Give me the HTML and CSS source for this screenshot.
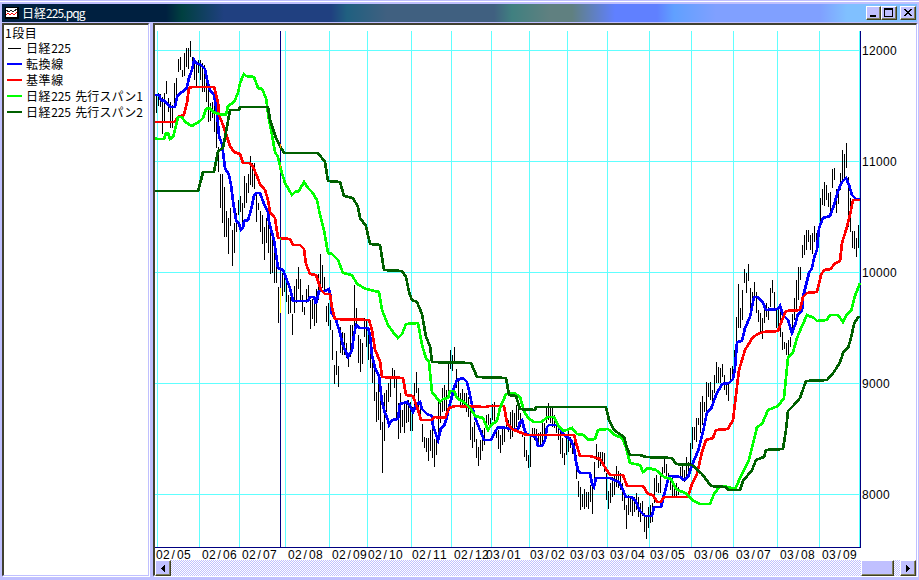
FILE: index.html
```html
<!DOCTYPE html>
<html lang="ja">
<head>
<meta charset="utf-8">
<title>日経225.pqg</title>
<link rel="stylesheet" href="styles.css">
</head>
<body>
<div class="window">
  <header class="titlebar">
    <svg class="app-icon" width="14" height="12" shape-rendering="crispEdges"><rect width="14" height="12" fill="#000"/><rect x="1" y="1" width="11" height="9" fill="#fff"/><path d="M1 3L4 5L6 3L8 5L12 2" fill="none" stroke="#222"/><path d="M1 8L3 6L5 8L7 6L9 8L12 5" fill="none" stroke="#f00"/></svg>
    <h1 class="title">日経<span>225.pqg</span></h1>
    <div class="controls">
      <button class="ctl min"><svg width="12" height="10" shape-rendering="crispEdges"><path d="M2 7h6v2H2z"/></svg></button>
      <button class="ctl"><svg width="12" height="10" shape-rendering="crispEdges"><path d="M1 0h9v9H1zM2 2v6h7V2z" fill-rule="evenodd"/></svg></button>
      <button class="ctl close"><svg width="12" height="10" shape-rendering="crispEdges"><path d="M2 1h2v1h1v1h2V2h1V1h2v1H9v1H8v1H7v1h1v1h1v1h1v1H8V7H7V6H5v1H4v1H2V7h1V6h1V5h1V4H4V3H3V2H2z"/></svg></button>
    </div>
  </header>
  <main class="content">
    <aside class="legend">
      <div class="heading">1段目</div>
      <ul>
        <li><i class="key price"></i><span>日経<em>225</em></span></li>
        <li><i class="key conversion"></i><span>転換線</span></li>
        <li><i class="key base"></i><span>基準線</span></li>
        <li><i class="key span1"></i><span>日経<em>225</em> <b>先行スパン1</b></span></li>
        <li><i class="key span2"></i><span>日経<em>225</em> <b>先行スパン2</b></span></li>
      </ul>
    </aside>
    <section class="chart-pane">
      <svg class="chart" viewBox="155 25 761 535" width="761" height="535">
        <g shape-rendering="crispEdges" fill="none">
          <path class="grid" d="M155 50.5H860M155 161.5H860M155 272.5H860M155 383.5H860M155 494.5H860M157.5 31V547M199.5 31V547M239.5 31V547M285.5 31V547M329.5 31V547M367.5 31V547M411.5 31V547M451.5 31V547M491.5 31V547M529.5 31V547M567.5 31V547M607.5 31V547M649.5 31V547M691.5 31V547M733.5 31V547M777.5 31V547M819.5 31V547M859.5 31V547"/>
          <path class="bars" id="bars"/>
          <path class="axis" d="M280.5 31V547M860.5 31V548M155 547.5H861"/>
          <polyline class="line conversion" points="155,95 159,95 161,100 165,101 168,105 171,107 175,107 177,97 180,93 184,91 187,87 189,78 192,70 194,60 196,63 201,65 205,69 207,80 210,90 214,95 217,112 219,136 222,144 225,168 229,175 231,185 233,201 236,220 239,224 241,230 243,228 244,221 248,220 251,210 254,196 256,193 260,193 264,204 268,212 269,222 274,240 278,268 283,270 288,283 290,288 293,301 308,301 310,297 314,297 316,304 319,291 325,291 329,289 331,298 331,312 336,320 340,333 343,345 348,357 352,350 354,335 356,325 360,328 368,328 370,335 372,355 375,368 379,376 382,402 385,413 388,420 389,425 392,420 398,419 400,404 407,402 410,406 413,412 416,405 420,402 422,409 427,414 432,416 433,426 438,440 441,428 444,426 447,417 449,407 451,400 454,388 457,380 463,378 467,382 470,395 473,410 476,420 480,430 484,440 491,440 495,432 498,427 513,429 518,429 520,422 522,420 524,428 526,434 536,437 538,446 542,446 545,440 547,427 549,425 558,425 563,434 571,440 574,448 576,462 578,470 580,473 590,473 592,484 594,487 596,478 610,478 614,480 619,482 622,488 626,497 632,497 636,502 640,511 645,516 652,516 654,507 661,507 664,495 668,480 670,476 680,477 684,480 688,477 692,465 698,451 703,432 707,412 711,409 716,395 722,384 729,383 733,379 735,368 737,342 742,341 745,328 750,317 754,297 758,297 763,303 766,310 778,309 780,306 783,315 788,320 792,333 795,325 798,314 802,311 803,297 809,273 812,268 814,258 817,250 819,228 823,218 830,216 834,205 838,191 842,182 846,178 849,185 852,195 856,199 860,199"/>
          <polyline class="line base" points="155,122 175,122 178,117 184,115 187,103 189,88 192,87 214,87 218,102 219,115 223,125 228,140 230,146 234,152 240,154 243,163 250,163 253,167 257,176 260,184 265,190 268,200 270,212 275,218 278,238 290,239 293,245 300,245 304,249 306,264 310,274 316,275 321,290 325,294 330,294 332,308 335,319 369,320 372,330 375,350 380,361 382,377 403,378 406,395 413,396 418,410 421,420 432,420 434,417 445,418 449,408 455,406 485,407 490,406 504,406 507,423 512,429 519,432 527,435 574,435 577,446 580,456 590,456 600,459 606,469 610,475 623,475 627,486 643,486 648,494 653,495 657,502 661,502 664,497 688,497 692,484 697,474 702,452 706,440 713,438 716,430 728,429 733,420 736,395 739,370 745,350 753,337 758,334 763,332 778,331 782,320 786,311 800,310 803,297 807,293 817,292 821,275 824,270 831,269 834,264 840,261 842,243 846,230 850,215 853,200 860,200"/>
          <polyline class="line span1" points="155,138 157,139 164,139 166,133 168,133 170,139 173,137 175,130 178,117 182,117 185,122 192,126 200,121 203,118 206,109 210,108 213,112 219,114 226,115 228,106 234,102 238,93 240,83 243,76 244,74 246,76 254,77 258,88 262,89 266,98 269,120 272,135 275,152 278,157 281,170 285,183 292,195 295,192 299,191 304,182 308,188 312,192 317,200 320,215 324,230 328,253 332,254 338,260 343,273 352,275 357,284 366,289 379,292 382,310 388,325 393,332 398,338 402,334 406,324 418,323 422,345 426,358 429,362 432,392 436,397 440,402 443,399 448,398 450,391 454,391 457,398 465,403 471,409 475,416 483,418 488,430 491,425 497,421 500,408 506,394 514,393 520,397 524,411 528,418 534,422 541,422 548,417 554,417 559,427 564,431 572,428 577,434 584,435 588,440 595,439 598,430 608,429 615,435 622,438 626,447 630,463 640,465 643,472 648,468 656,470 664,477 671,479 676,489 687,494 692,500 700,504 710,504 714,494 720,486 728,487 735,489 742,474 749,460 757,427 762,424 768,410 778,406 784,398 788,358 793,352 797,338 802,326 807,315 814,318 817,321 827,320 830,315 838,315 843,322 847,314 851,311 855,296 860,283"/>
          <polyline class="line span2" points="155,191 198,191 201,180 203,172 214,172 218,151 223,148 226,132 230,110 239,110 240,107 268,107 270,120 276,138 280,146 284,153 318,153 325,162 328,181 340,182 344,196 353,198 358,207 360,218 366,226 370,244 380,245 384,270 402,271 406,277 409,292 412,300 417,302 422,314 426,337 430,346 432,362 471,363 477,377 506,378 509,395 516,396 520,409 535,410 536,407 606,407 609,420 614,430 624,437 627,448 630,455 640,455 646,457 672,458 676,464 692,465 702,474 711,486 725,487 729,490 740,490 743,481 752,470 756,460 764,457 766,450 783,449 786,430 788,411 793,406 800,398 806,381 827,380 834,372 839,364 842,357 843,352 848,348 851,338 854,324 858,317 860,317"/>
          <path d="M280.5 288V313" stroke="#ff0"/>
          <path d="M280.5 144V148M280.5 165V168" stroke="#f80"/>
          <path d="M280.5 238V240" stroke="#0f0"/>
        </g>
        <g class="labels">
          <text x="862" y="55">12000</text><text x="862" y="166">11000</text><text x="862" y="277">10000</text><text x="862" y="388">9000</text><text x="862" y="499">8000</text>
          <text x="156" y="559">02/05</text><text x="202" y="559">02/06</text><text x="242" y="559">02/07</text><text x="288" y="559">02/08</text><text x="332" y="559">02/09</text><text x="368" y="559">02/10</text><text x="412" y="559">02/11</text><text x="454" y="559">02/12</text><text x="486" y="559">03/01</text><text x="530" y="559">03/02</text><text x="570" y="559">03/03</text><text x="610" y="559">03/04</text><text x="650" y="559">03/05</text><text x="694" y="559">03/06</text><text x="736" y="559">03/07</text><text x="780" y="559">03/08</text><text x="822" y="559">03/09</text>
        </g>
      </svg>
      <div class="scrollbar">
        <button class="arrow"><svg width="4" height="7" shape-rendering="crispEdges"><path d="M4 0v7L0 3.5z"/></svg></button>
        <div class="track"><div class="thumb"></div></div>
        <button class="arrow"><svg width="4" height="7" shape-rendering="crispEdges"><path d="M0 0v7L4 3.5z"/></svg></button>
      </div>
    </section>
  </main>
</div>
<script src="chart.js"></script>
</body>
</html>
```
FILE: styles.css
```css
* { box-sizing: border-box; }
body { margin: 0; font: 12px/16px "Noto Sans CJK JP", sans-serif; color: #000; }
.window { width: 919px; height: 580px; background: #c0c0ff; display: flex; flex-direction: column; padding: 4px 2px 2px; box-shadow: inset 0 1px #c0c0ff, inset 0 2px #fff; overflow: hidden; }
.titlebar { height: 18px; flex: none; display: flex; align-items: center; padding: 0 1px 0 3px; color: #fff;
  background: linear-gradient(90deg, #002040 0 164px, #004040 180px, #204080 222px 329px, #206080 345px, #406080 385px 492px, #408080 510px, #608080 548px 570px, #6080ff 613px 655px, #60a0ff 672px, #80a0ff 714px 818px, #80c0ff 845px); }
.app-icon { flex: none; }
.title { margin: 0 0 0 3px; font-size: 12px; font-weight: 400; line-height: 18px; }
.title span { letter-spacing: -.9px; }
.controls { margin-left: auto; display: flex; }
button { padding: 0; background: #c0c0ff; border: 1px solid; border-color: #fff #404020 #404020 #fff; display: flex; align-items: center; justify-content: center; box-shadow: inset -1px -1px #808060; }
.ctl { width: 16px; height: 14px; }
.min { width: 15px; }
.close { margin-left: 3px; }
.content { flex: 1; min-height: 0; display: flex; gap: 4px; padding-top: 1px; }
.legend, .chart-pane { background: #fff; border: solid; border-width: 2px 1px 1px 2px; border-color: #404030 #c0c0ff #c0c0ff #404030; box-shadow: 1px 1px #fff; }
.legend { width: 147px; height: 553px; padding-left: 1px; white-space: nowrap; }
.heading { line-height: 15px; letter-spacing: .5px; }
ul { list-style: none; margin: 0; padding: 0; }
li { height: 16px; display: flex; align-items: center; gap: 4px; padding-left: 2px; letter-spacing: .6px; }
em { font-style: normal; letter-spacing: -.1px; }
b { font-weight: 400; letter-spacing: .1px; }
em + b { margin-left: 1px; }
.key { width: 15px; height: 2px; }
.key.price { height: 1px; width: 13px; margin: 0 1px; background: #000; }
.key.conversion { background: #00f; }
.key.base { background: #f00; }
.key.span1 { background: #0f0; }
.key.span2 { background: #006000; }
.chart-pane { flex: 1; min-width: 0; height: 553px; display: flex; flex-direction: column; }
.chart { display: block; flex: none; overflow: visible; }
.grid { stroke: #60ffff; }
.bars { stroke: #000; }
.axis { stroke: #000080; }
.line { stroke-width: 2.7; }
.line.conversion { stroke: #00f; }
.line.base { stroke: #f00; }
.line.span1 { stroke: #0f0; }
.line.span2 { stroke: #006000; }
.labels { font: 12px "Liberation Sans", sans-serif; }
.scrollbar { height: 16px; display: flex; background: repeating-conic-gradient(#fff 0 25%, #c0c0ff 0 50%) 0 0 / 2px 2px; }
.arrow { width: 16px; height: 16px; flex: none; }
.track { flex: 1; display: flex; justify-content: flex-end; padding-right: 6px; }
.thumb { width: 33px; height: 16px; background: #c0c0ff; border: 1px solid; border-color: #fff #404020 #404020 #fff; box-shadow: inset -1px -1px #808060; }
```
FILE: chart.js
```js
// High/low pixel rows for each session, two pixels apart.
const sessions = `95-113 93-106 94-107 97-134 93-122 81-94 98-112 102-128 105-128 83-107 78-97 59-72 57-70 70-77 53-76 48-67 48-69 41-57 57-66 60-80 62-86 60-73 60-80 63-92 65-92 73-102 90-122 103-121 102-118 100-132 110-148 147-172
174-208 174-223 187-237 211-237 218-254 208-226 230-266 223-253 213-232 200-215 196-212 203-222 176-208 183-203 174-193 156-185 163-187 163-189 193-222 203-210 211-232 215-244 227-260 218-243 225-253 228-274 235-273 247-283 253-283 287-323 280-280 273-296 277-292 282-302 295-314 297-313 314-335 286-313 279-303 267-289
279-300 295-312 307-315 289-303 285-300 300-329 299-319 300-326 289-323 274-300 254-287 265-288 277-293 306-322 303-326 320-330 330-360 365-384 351-375 366-387
327-353 332-355 333-355 343-358 353-367 325-357 325-350 285-337 308-327 335-363 339-372 343-364 318-337 319-347 330-360 348-368 362-383 363-401 392-422 383-420
387-430 422-473 393-441 390-412 383-402 378-397 368-377 370-388 377-418 403-439 393-433 410-427 403-433 403-423 400-422 402-431 407-431 383-407 372-393 388-407
403-420 424-442 437-448 438-452 438-461 430-451 428-458 439-467 433-455 398-440 400-423 388-412 385-411 390-411 363-398 350-369 355-371 347-362 369-388 381-398
393-405 389-406 393-405 393-412 397-417 410-440 427-448 422-442 439-458 447-466 440-460 430-451 428-445 415-429 414-425 418-427 404-420 402-422 428-438 430-449
435-453 426-445 426-442 415-427 420-432 412-439 410-437 413-428 405-427 402-420 413-427 432-437 437-457 450-461 455-468 437-467 428-437 428-440 429-445 433-446
432-447 423-445 423-443 407-423 403-420 407-423 408-427 415-428 420-433 423-440 432-454 438-458 453-465 437-455 430-452 437-448 442-454 442-455 455-479 481-497
487-510 494-507 489-509 492-507 492-509 485-502 487-514 462-485 444-460 452-468 452-466 452-465 453-472 473-500 491-509 483-503 477-497 475-495 466-487 471-488
473-490 483-501 492-510 505-529 495-515 497-512 500-516 497-512 493-510 497-517 503-522 501-516 513-532 515-539 507-528 505-523 503-522 478-503 475-492 483-493
473-493 467-477 457-473 464-477 473-480 477-490 478-497 485-498 483-497 487-495 467-477 465-478 470-482 457-477 462-473 443-467 427-449 427-440 418-442 418-425
402-433 396-425 402-412 382-413 383-397 382-400 390-407 375-393 362-383 367-383 368-383 364-377 375-390 383-395 384-401 368-382 366-380 350-373 317-343 284-328
308-328 290-320 269-283 273-293 264-281 288-313 292-310 282-300 292-313 310-322 313-333 318-339 308-323 303-317 307-320 288-307 280-293 292-310 308-328 310-328
310-337 332-350 342-349 343-355 340-358 337-347 314-330 298-320 280-310 267-300 267-280 245-258 235-255 230-250 230-242 235-250 233-254 226-242 233-247 227-240
198-227 189-205 182-206 185-200 193-207 192-212 169-188 168-180 189-213 188-204 173-190 150-180 154-178 143-168 177-227 198-232 231-248 231-249 238-257 225-248`.split(/\s+/);
document.getElementById('bars').setAttribute('d', sessions.map((s, i) => {
  const [high, low] = s.split('-');
  return `M${156.5 + i * 2} ${high}V${low}`;
}).join(''));

// Axis labels sit on a fixed 7px character grid; the narrow slash is centred in its cell.
document.querySelectorAll('.labels text').forEach((label) => {
  const start = Number(label.getAttribute('x'));
  label.setAttribute('x', [...label.textContent].map((c, i) => start + i * 7 + (c === '/' ? 1.5 : 0)).join(' '));
});
```
